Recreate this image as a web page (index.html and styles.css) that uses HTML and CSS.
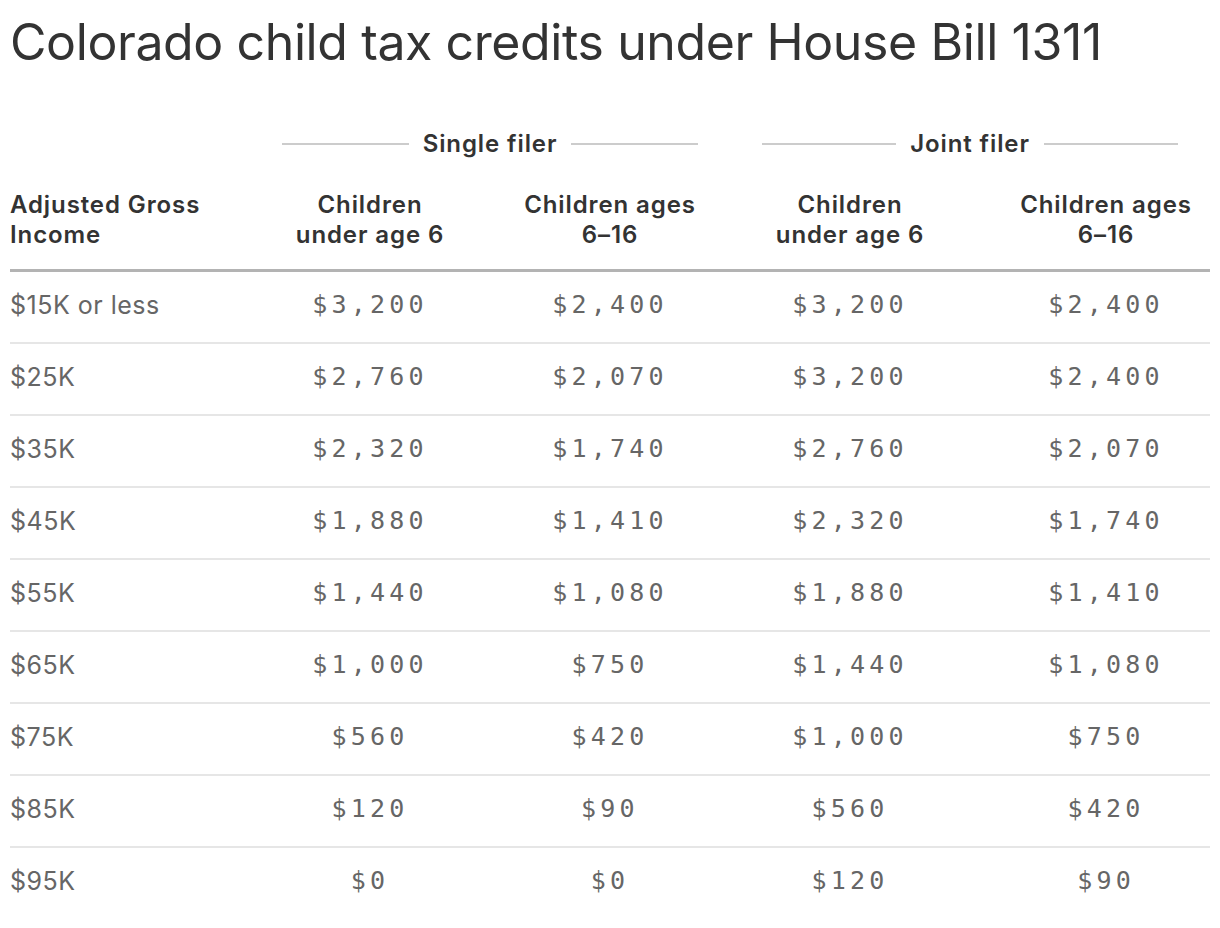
FILE: index.html
```html
<!DOCTYPE html>
<html lang="en">
<head>
<meta charset="utf-8">
<title>Colorado child tax credits under House Bill 1311</title>
<link rel="stylesheet" href="styles.css">
</head>
<body>
<main class="chart">
  <h1 class="title">Colorado child tax credits under House Bill 1311</h1>
  <table class="credits">
    <colgroup>
      <col class="c-income">
      <col class="c-val">
      <col class="c-val">
      <col class="c-val">
      <col class="c-val">
    </colgroup>
    <thead>
      <tr class="spanners">
        <th></th>
        <th colspan="2"><div class="spanner"><span class="rule"></span><span class="label">Single filer</span><span class="rule"></span></div></th>
        <th colspan="2"><div class="spanner"><span class="rule"></span><span class="label">Joint filer</span><span class="rule"></span></div></th>
      </tr>
      <tr class="heads">
        <th class="first">Adjusted Gross<br>Income</th>
        <th>Children<br>under age 6</th>
        <th>Children ages<br>6–16</th>
        <th>Children<br>under age 6</th>
        <th class="last">Children ages<br>6–16</th>
      </tr>
    </thead>
    <tbody>
      <tr><td class="first">$15K or less</td><td>$3,200</td><td>$2,400</td><td>$3,200</td><td class="last">$2,400</td></tr>
      <tr><td class="first">$25K</td><td>$2,760</td><td>$2,070</td><td>$3,200</td><td class="last">$2,400</td></tr>
      <tr><td class="first">$35K</td><td>$2,320</td><td>$1,740</td><td>$2,760</td><td class="last">$2,070</td></tr>
      <tr><td class="first">$45K</td><td>$1,880</td><td>$1,410</td><td>$2,320</td><td class="last">$1,740</td></tr>
      <tr><td class="first">$55K</td><td>$1,440</td><td>$1,080</td><td>$1,880</td><td class="last">$1,410</td></tr>
      <tr><td class="first">$65K</td><td>$1,000</td><td>$750</td><td>$1,440</td><td class="last">$1,080</td></tr>
      <tr><td class="first">$75K</td><td>$560</td><td>$420</td><td>$1,000</td><td class="last">$750</td></tr>
      <tr><td class="first">$85K</td><td>$120</td><td>$90</td><td>$560</td><td class="last">$420</td></tr>
      <tr><td class="first">$95K</td><td>$0</td><td>$0</td><td>$120</td><td class="last">$90</td></tr>
    </tbody>
  </table>
</main>
</body>
</html>
```

FILE: styles.css
```css
html, body {
  margin: 0;
  padding: 0;
  background: #ffffff;
}

.chart {
  padding: 12px 10px 0 10px;
  font-family: Inter, "Liberation Sans", Arial, sans-serif;
  color: #333333;
}

.title {
  margin: 0 0 56px 0;
  font-size: 50px;
  line-height: 1.2;
  font-weight: 400;
  color: #333333;
  letter-spacing: -0.4px;
}

.credits {
  width: 1200px;
  border-collapse: collapse;
  table-layout: fixed;
}

.c-income { width: 240px; }
.c-val { width: 240px; }

.credits th {
  font-weight: 600;
  font-size: 24px;
  line-height: 30px;
  color: #333333;
  padding: 0;
  text-align: center;
  letter-spacing: 0.9px;
}

.spanners th {
  height: 32px;
}

.spanner {
  display: flex;
  align-items: center;
  gap: 14px;
  padding: 0 32px;
}

.spanner .rule {
  flex: 1;
  height: 2px;
  background: #cccccc;
}

.spanner .label {
  white-space: nowrap;
}

.heads th {
  padding: 30px 0 19px 0;
  border-bottom: 3px solid #b3b3b3;
  vertical-align: bottom;
}

.credits .first {
  text-align: left;
}

.credits .last {
  padding-left: 32px;
}

.credits td {
  height: 65px;
  padding: 0 0 5px 0;
  text-align: center;
  vertical-align: middle;
  font-family: "DejaVu Sans Mono", monospace;
  font-size: 25px;
  letter-spacing: 4.2px;
  color: #666666;
  border-bottom: 2px solid #e6e6e6;
}

.credits td.first {
  font-family: Inter, "Liberation Sans", Arial, sans-serif;
  font-size: 25px;
  letter-spacing: 0.5px;
}

.credits td.last {
  padding-left: 32px;
}

.credits tbody tr:last-child td {
  border-bottom: none;
}
```
